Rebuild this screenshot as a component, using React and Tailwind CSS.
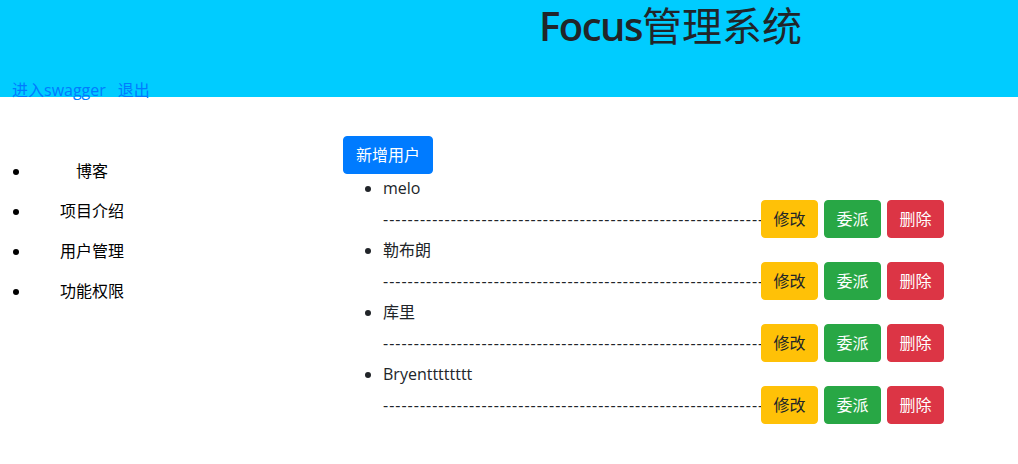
import React from "react";

const users = ["melo", "勒布朗", "库里", "Bryentttttttt"];
const menu = ["博客", "项目介绍", "用户管理", "功能权限"];
const font = { fontFamily: '"Open Sans", "Noto Sans CJK SC", sans-serif' };

function Btn({ className, children }) {
  return (
    <button className={`h-[38px] border rounded-[4px] text-base leading-6 ${className}`}>
      {children}
    </button>
  );
}

export default function App() {
  return (
    <div className="min-h-[464px] bg-white text-[#212529]" style={font}>
      <div className="h-[97px] bg-[#00ccff]">
        <h1 className="pl-[539px] pt-[2px] text-[40px] leading-[48px] text-[#212529]">
          <span className="font-semibold tracking-[-1.5px]">Focus</span>
          <span className="font-normal">管理系统</span>
        </h1>
        <div className="mt-[28px] pl-3 text-base leading-6 text-[#007bff]">
          <a className="mr-3">进入swagger</a>
          <a>退出</a>
        </div>
      </div>

      <div className="flex">
        <ul className="w-[343px] pl-[31px] mt-[54px] list-disc text-black">
          {menu.map((m) => (
            <li key={m} className="w-[122px] py-2 leading-6 text-center">
              {m}
            </li>
          ))}
        </ul>

        <div className="pt-[39px]">
          <Btn className="px-3 border-[#007bff] bg-[#007bff] text-white">新增用户</Btn>
          <ul className="pl-10 mt-[2px] list-disc">
            {users.map((u) => (
              <li key={u} className="leading-6">
                <div>{u}</div>
                <div className="flex items-center">
                  <span className="w-[378px] overflow-hidden whitespace-nowrap tracking-[1px]">
                    {"-".repeat(80)}
                  </span>
                  <div className="flex gap-[6px]">
                    <Btn className="w-[57px] border-[#ffc107] bg-[#ffc107] text-[#212529]">修改</Btn>
                    <Btn className="w-[57px] border-[#28a745] bg-[#28a745] text-white">委派</Btn>
                    <Btn className="w-[57px] border-[#dc3545] bg-[#dc3545] text-white">删除</Btn>
                  </div>
                </div>
              </li>
            ))}
          </ul>
        </div>
      </div>
    </div>
  );
}
